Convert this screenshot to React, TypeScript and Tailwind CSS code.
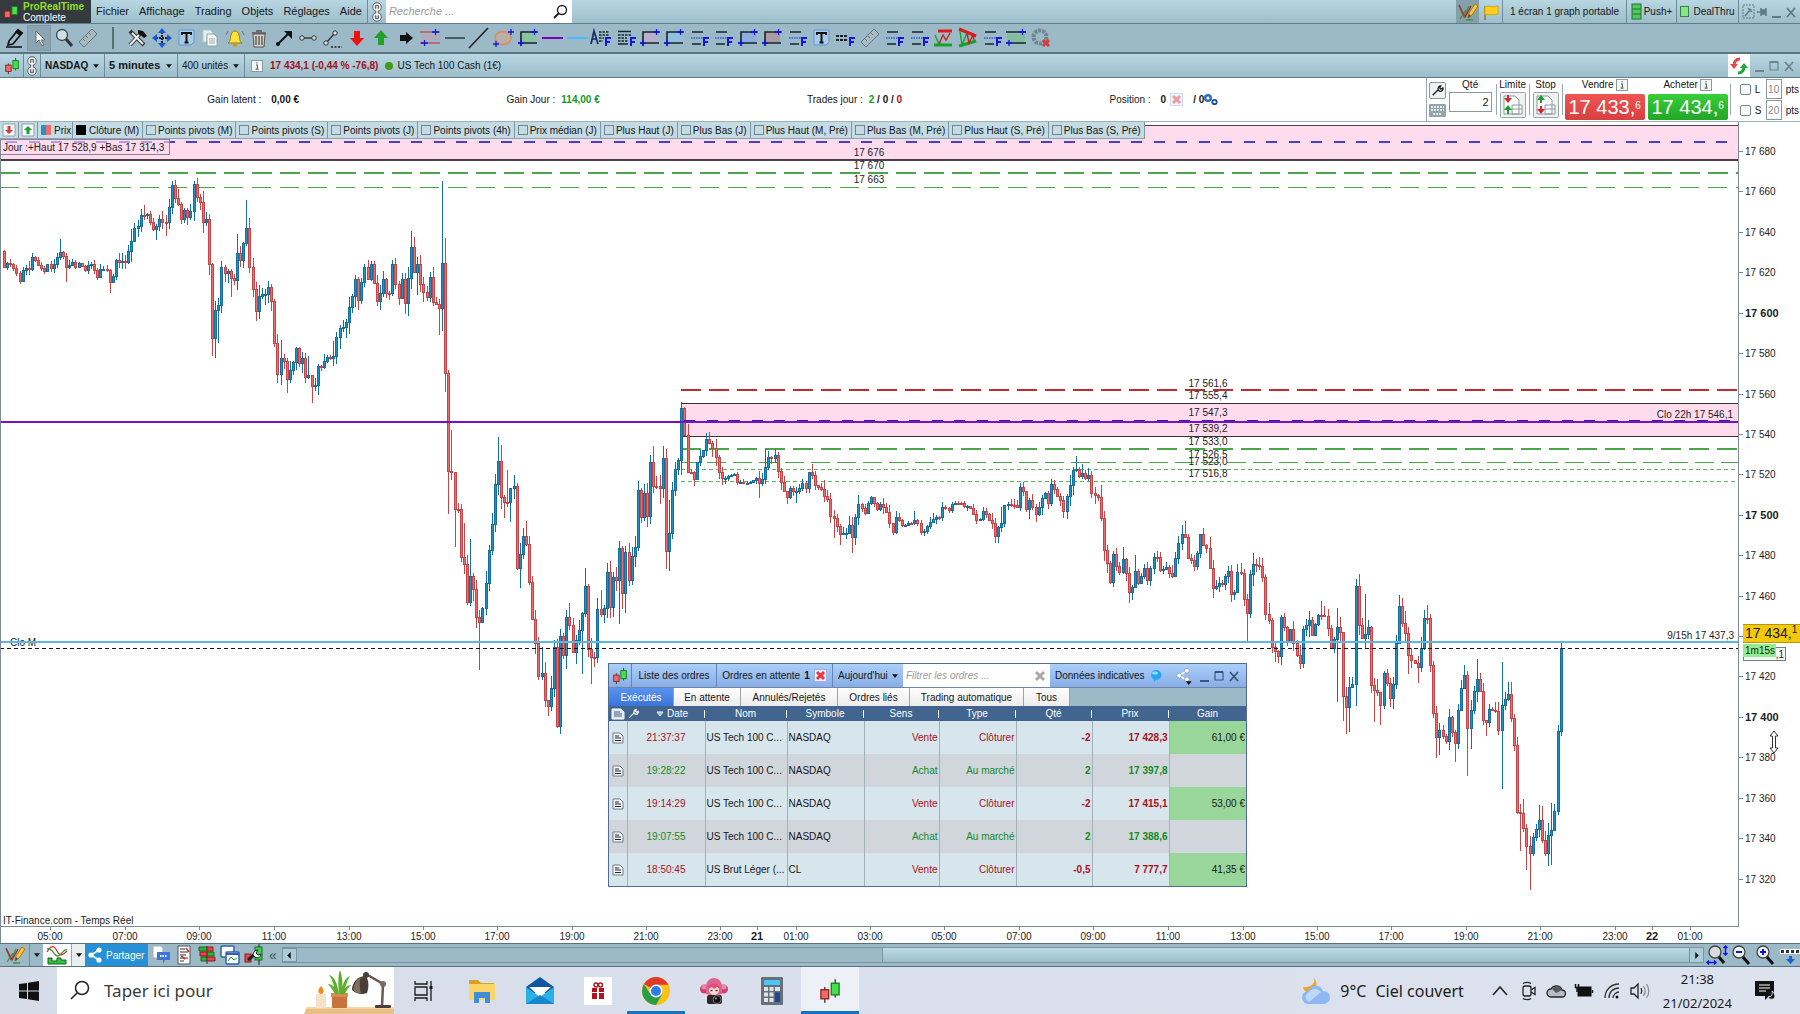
import React, { useMemo, useState } from 'react';

// [x, close, high, low] on the chart grid, 0 when the wick is ordinary
const anchors: number[][] = [
  [4, 267, 0, 0], [8, 263, 0, 0], [13, 268, 0, 0], [16, 273, 0, 0], [20, 281, 0, 0], [22, 270, 0, 0], [29, 269, 0, 0], [31, 257, 0, 0],
  [35, 260, 0, 0], [40, 268, 0, 0], [44, 271, 0, 0], [46, 264, 0, 0], [52, 268, 0, 0], [57, 257, 0, 0], [60, 252, 239, 0], [62, 256, 0, 0],
  [66, 267, 0, 282], [71, 262, 0, 0], [77, 267, 0, 0], [80, 263, 0, 0], [86, 270, 0, 0], [90, 264, 0, 0], [96, 277, 0, 0], [99, 269, 0, 0],
  [105, 270, 0, 0], [109, 282, 0, 293], [114, 276, 0, 0], [116, 260, 0, 0], [126, 262, 0, 0], [129, 251, 0, 0], [132, 241, 0, 0], [135, 228, 0, 0],
  [138, 226, 0, 0], [141, 215, 0, 0], [144, 215, 205, 0], [148, 214, 0, 0], [153, 229, 0, 0], [156, 226, 0, 240], [159, 219, 0, 0], [163, 222, 0, 0],
  [166, 222, 0, 236], [169, 207, 0, 0], [172, 185, 181, 0], [175, 198, 180, 0], [178, 204, 0, 0], [181, 219, 0, 0], [184, 210, 0, 0], [187, 217, 0, 225],
  [190, 211, 0, 0], [194, 184, 0, 0], [197, 197, 0, 0], [200, 202, 0, 0], [203, 222, 0, 0], [206, 219, 0, 0], [209, 264, 214, 0], [212, 338, 0, 356],
  [215, 310, 0, 358], [218, 305, 0, 343], [221, 267, 0, 0], [225, 273, 0, 0], [228, 271, 0, 0], [231, 278, 0, 297], [234, 280, 0, 0], [237, 253, 234, 0],
  [240, 260, 0, 0], [243, 243, 0, 0], [246, 228, 200, 0], [249, 267, 218, 0], [252, 289, 0, 0], [255, 311, 0, 0], [259, 296, 0, 319], [264, 294, 0, 0],
  [268, 287, 0, 0], [271, 301, 0, 0], [274, 343, 0, 0], [277, 374, 0, 383], [280, 358, 340, 0], [283, 361, 0, 0], [286, 379, 0, 393], [289, 370, 0, 0],
  [293, 362, 0, 0], [296, 348, 0, 0], [299, 363, 347, 0], [302, 358, 0, 0], [305, 377, 0, 0], [308, 375, 356, 0], [311, 386, 0, 403], [314, 385, 0, 0],
  [318, 366, 0, 395], [321, 367, 0, 0], [326, 357, 0, 0], [332, 356, 341, 0], [336, 337, 0, 0], [339, 328, 0, 0], [346, 322, 0, 0], [349, 307, 0, 334],
  [352, 296, 0, 0], [355, 279, 0, 0], [358, 300, 0, 0], [361, 282, 0, 0], [364, 267, 0, 0], [367, 279, 0, 0], [370, 264, 0, 0], [374, 283, 0, 0],
  [377, 301, 0, 0], [380, 293, 0, 0], [383, 279, 0, 0], [386, 293, 0, 0], [390, 293, 0, 0], [393, 264, 0, 0], [396, 284, 0, 0], [398, 298, 0, 0],
  [401, 279, 0, 0], [404, 303, 0, 0], [408, 278, 0, 316], [411, 247, 231, 0], [414, 272, 237, 0], [417, 264, 0, 295], [420, 284, 0, 0], [426, 297, 0, 0],
  [430, 277, 0, 0], [433, 302, 0, 0], [439, 308, 0, 335], [442, 263, 181, 331], [445, 373, 238, 392], [448, 471, 370, 514], [451, 472, 430, 0], [454, 509, 0, 547],
  [457, 509, 0, 0], [461, 557, 0, 0], [464, 564, 523, 0], [467, 602, 0, 0], [470, 576, 539, 606], [473, 589, 0, 0], [476, 617, 0, 0], [479, 622, 0, 670],
  [482, 608, 0, 0], [485, 583, 0, 0], [488, 550, 0, 0], [492, 524, 0, 0], [495, 484, 0, 0], [498, 461, 437, 0], [501, 497, 445, 0], [504, 502, 0, 518],
  [507, 502, 470, 0], [510, 488, 0, 522], [514, 486, 475, 0], [517, 568, 0, 0], [520, 554, 0, 588], [523, 536, 0, 0], [526, 544, 521, 0], [529, 582, 0, 0],
  [532, 619, 0, 0], [535, 643, 0, 0], [538, 676, 0, 0], [542, 673, 647, 0], [545, 700, 0, 0], [547, 706, 0, 716], [551, 688, 0, 0], [554, 647, 0, 0],
  [557, 726, 0, 728], [560, 636, 629, 0], [563, 655, 0, 0], [566, 617, 0, 669], [569, 625, 603, 0], [572, 652, 0, 0], [575, 640, 0, 664], [578, 630, 0, 0],
  [582, 613, 0, 674], [585, 586, 568, 0], [588, 649, 0, 0], [591, 657, 0, 684], [594, 657, 0, 0], [597, 609, 0, 0], [600, 614, 590, 0], [603, 608, 0, 0],
  [607, 572, 0, 0], [610, 607, 561, 0], [613, 577, 0, 0], [616, 580, 0, 0], [619, 548, 0, 624], [622, 593, 0, 609], [625, 552, 0, 613], [628, 580, 0, 0],
  [631, 556, 0, 0], [635, 547, 0, 0], [638, 490, 0, 0], [641, 517, 0, 0], [644, 493, 0, 0], [647, 516, 0, 527], [650, 462, 0, 0], [653, 486, 446, 0],
  [659, 488, 0, 504], [663, 458, 0, 0], [666, 551, 449, 569], [669, 533, 500, 571], [672, 490, 0, 0], [675, 469, 0, 0], [678, 460, 0, 0], [681, 408, 402, 475],
  [684, 435, 407, 0], [687, 472, 0, 0], [691, 472, 0, 0], [694, 479, 0, 486], [697, 462, 0, 0], [702, 450, 0, 0], [705, 439, 0, 0], [708, 443, 0, 0],
  [712, 448, 0, 0], [715, 457, 0, 0], [718, 472, 0, 0], [722, 478, 0, 0], [730, 475, 0, 0], [733, 474, 0, 0], [737, 482, 0, 0], [747, 483, 0, 0],
  [755, 478, 0, 0], [758, 483, 0, 498], [761, 479, 0, 0], [765, 467, 449, 0], [769, 457, 0, 0], [774, 455, 449, 0], [777, 471, 0, 0], [780, 482, 0, 0],
  [783, 491, 0, 0], [787, 497, 0, 504], [790, 488, 0, 0], [795, 491, 0, 503], [802, 483, 0, 0], [806, 488, 0, 0], [809, 472, 0, 0], [812, 475, 464, 0],
  [815, 485, 0, 0], [820, 489, 0, 0], [826, 499, 0, 0], [829, 516, 0, 0], [833, 518, 0, 538], [839, 534, 0, 545], [845, 533, 0, 0], [848, 525, 0, 0],
  [852, 537, 0, 553], [855, 517, 0, 0], [858, 504, 0, 0], [864, 513, 0, 0], [868, 503, 0, 0], [871, 497, 0, 0], [877, 509, 0, 0], [880, 504, 0, 0],
  [887, 512, 0, 0], [892, 532, 0, 0], [895, 517, 0, 0], [902, 525, 0, 0], [907, 523, 0, 0], [913, 520, 511, 0], [918, 523, 0, 0], [921, 532, 0, 0],
  [924, 531, 0, 0], [927, 526, 0, 0], [933, 519, 0, 0], [938, 517, 0, 0], [942, 507, 0, 0], [949, 510, 0, 0], [953, 504, 0, 0], [962, 503, 0, 0],
  [970, 508, 0, 0], [976, 520, 0, 0], [979, 519, 0, 0], [982, 511, 0, 0], [988, 520, 0, 0], [992, 523, 0, 0], [995, 536, 0, 0], [998, 527, 0, 0],
  [1001, 523, 507, 0], [1004, 505, 0, 0], [1010, 505, 0, 0], [1017, 507, 0, 0], [1020, 487, 0, 0], [1023, 491, 482, 0], [1026, 509, 0, 0], [1029, 500, 0, 519],
  [1035, 514, 0, 522], [1038, 507, 0, 0], [1041, 498, 0, 0], [1044, 493, 0, 0], [1047, 503, 0, 0], [1051, 484, 479, 0], [1055, 489, 480, 0], [1060, 500, 0, 0],
  [1063, 511, 0, 0], [1066, 496, 0, 0], [1069, 485, 0, 0], [1072, 470, 0, 0], [1075, 469, 456, 0], [1078, 476, 0, 0], [1082, 473, 464, 0], [1085, 478, 0, 0],
  [1090, 470, 0, 0], [1093, 493, 0, 0], [1097, 497, 0, 0], [1100, 518, 0, 0], [1103, 550, 0, 0], [1106, 563, 0, 573], [1109, 582, 0, 0], [1113, 554, 0, 0],
  [1116, 566, 0, 0], [1119, 572, 0, 0], [1122, 559, 547, 0], [1125, 573, 0, 0], [1128, 592, 0, 603], [1131, 587, 0, 600], [1134, 571, 555, 0], [1137, 583, 0, 0],
  [1143, 568, 0, 0], [1147, 580, 0, 0], [1150, 568, 0, 0], [1153, 557, 0, 0], [1156, 557, 551, 0], [1159, 570, 0, 0], [1165, 567, 0, 0], [1168, 573, 0, 0],
  [1172, 576, 0, 0], [1175, 558, 0, 0], [1178, 543, 0, 0], [1181, 534, 0, 0], [1184, 537, 521, 0], [1187, 558, 0, 0], [1193, 566, 0, 0], [1196, 553, 0, 0],
  [1199, 534, 0, 0], [1203, 545, 528, 0], [1206, 548, 0, 0], [1209, 568, 0, 0], [1212, 588, 0, 598], [1218, 583, 0, 0], [1222, 584, 0, 0], [1227, 571, 0, 0],
  [1230, 594, 565, 602], [1233, 592, 0, 0], [1237, 572, 0, 0], [1240, 573, 0, 0], [1243, 599, 0, 0], [1246, 613, 0, 643], [1249, 574, 0, 0], [1252, 564, 553, 0],
  [1258, 566, 557, 0], [1261, 577, 0, 0], [1265, 614, 0, 0], [1268, 620, 0, 0], [1271, 647, 0, 0], [1277, 656, 0, 663], [1280, 617, 0, 0], [1283, 627, 0, 0],
  [1286, 642, 0, 0], [1289, 629, 0, 0], [1293, 643, 0, 0], [1299, 663, 0, 669], [1302, 629, 0, 0], [1308, 620, 0, 0], [1311, 635, 0, 0], [1317, 615, 0, 0],
  [1320, 615, 601, 0], [1324, 616, 606, 0], [1329, 628, 0, 0], [1332, 648, 0, 0], [1336, 627, 608, 702], [1339, 632, 0, 0], [1342, 696, 0, 721], [1345, 707, 0, 734],
  [1349, 687, 0, 732], [1352, 684, 0, 0], [1355, 586, 579, 706], [1358, 625, 0, 0], [1361, 638, 0, 0], [1364, 634, 594, 0], [1367, 627, 0, 0], [1370, 685, 0, 0],
  [1373, 690, 0, 722], [1377, 692, 0, 0], [1380, 705, 0, 725], [1383, 673, 0, 0], [1386, 683, 0, 0], [1389, 698, 0, 0], [1392, 684, 0, 0], [1395, 643, 0, 0],
  [1398, 606, 0, 0], [1401, 623, 598, 0], [1406, 633, 0, 0], [1409, 655, 0, 674], [1414, 663, 0, 0], [1417, 667, 0, 683], [1420, 648, 0, 0], [1423, 618, 0, 0],
  [1426, 618, 605, 0], [1429, 665, 0, 0], [1432, 713, 0, 0], [1435, 737, 0, 758], [1439, 730, 0, 755], [1446, 741, 0, 0], [1450, 717, 0, 0], [1454, 743, 0, 762],
  [1457, 710, 0, 0], [1460, 688, 0, 0], [1463, 675, 665, 0], [1466, 728, 671, 776], [1470, 710, 0, 749], [1473, 691, 0, 0], [1476, 679, 659, 0], [1479, 691, 0, 0],
  [1482, 720, 0, 0], [1485, 722, 0, 736], [1489, 709, 0, 0], [1494, 711, 0, 0], [1497, 730, 0, 0], [1500, 730, 0, 0], [1503, 705, 662, 789], [1507, 694, 682, 0],
  [1510, 718, 682, 0], [1513, 745, 0, 0], [1516, 812, 0, 0], [1519, 813, 0, 851], [1522, 828, 799, 0], [1525, 846, 0, 870], [1528, 883, 0, 890], [1531, 853, 0, 890],
  [1534, 837, 0, 0], [1538, 820, 805, 0], [1541, 840, 806, 0], [1544, 853, 0, 0], [1548, 835, 0, 866], [1552, 830, 803, 865], [1556, 789, 0, 0], [1559, 731, 725, 0],
  [1562, 648, 643, 736],
];

const STEP = 3.107;
const noise = (i: number) => {
  const v = Math.sin(i * 12.9898) * 43758.5453;
  return v - Math.floor(v);
};

const buildCandles = () => {
  const count = Math.round((1562 - 4) / STEP) + 1;
  const closes: number[] = [];
  const highs: number[] = new Array(count).fill(0);
  const lows: number[] = new Array(count).fill(0);
  let prev = { i: 0, y: anchors[0][1] };
  anchors.forEach(([x, close, high, low]) => {
    const i = Math.min(count - 1, Math.round((x - 4) / STEP));
    for (let k = prev.i + 1; k < i; k++) {
      const base = prev.y + ((close - prev.y) * (k - prev.i)) / (i - prev.i);
      closes[k] = base + (noise(k) - 0.5) * 4;
    }
    closes[i] = close;
    if (high) highs[i] = high;
    if (low) lows[i] = low;
    prev = { i, y: close };
  });
  return closes.map((close, i) => {
    const open = i === 0 ? 251 : closes[i - 1];
    const around = closes.slice(Math.max(0, i - 3), i + 4);
    const range = Math.max(...around) - Math.min(...around);
    const reach = 1 + Math.min(11, range * 0.25);
    const high = highs[i] || Math.min(open, close) - noise(i + 900) * reach;
    const low = lows[i] || Math.max(open, close) + noise(i + 400) * reach;
    return { x: 4 + i * STEP, open, close, high, low };
  });
};

const priceY = (price: number) => Math.round(151 + (17680 - price) * 2.021);

const axisPrices = [17680, 17660, 17640, 17620, 17600, 17580, 17560, 17540, 17520, 17500, 17480, 17460, 17420, 17400, 17380, 17360, 17340, 17320];

const formatPrice = (price: number) => `${Math.floor(price / 1000)} ${String(price % 1000).padStart(3, '0')}`;

const timeTicks = [
  { x: 50, label: '05:00' }, { x: 125, label: '07:00' }, { x: 199, label: '09:00' }, { x: 274, label: '11:00' },
  { x: 349, label: '13:00' }, { x: 423, label: '15:00' }, { x: 497, label: '17:00' }, { x: 572, label: '19:00' },
  { x: 646, label: '21:00' }, { x: 720, label: '23:00' }, { x: 757, label: '21', bold: true }, { x: 796, label: '01:00' },
  { x: 870, label: '03:00' }, { x: 944, label: '05:00' }, { x: 1019, label: '07:00' }, { x: 1093, label: '09:00' },
  { x: 1168, label: '11:00' }, { x: 1243, label: '13:00' }, { x: 1317, label: '15:00' }, { x: 1391, label: '17:00' },
  { x: 1466, label: '19:00' }, { x: 1540, label: '21:00' }, { x: 1615, label: '23:00' }, { x: 1652, label: '22', bold: true },
  { x: 1690, label: '01:00' },
];

const levelLabels = [
  { x: 869, y: 152, text: '17 676' },
  { x: 869, y: 165, text: '17 670' },
  { x: 869, y: 179, text: '17 663' },
  { x: 1208, y: 383, text: '17 561,6' },
  { x: 1208, y: 395, text: '17 555,4' },
  { x: 1208, y: 412, text: '17 547,3' },
  { x: 1208, y: 428, text: '17 539,2' },
  { x: 1208, y: 441, text: '17 533,0' },
  { x: 1208, y: 454, text: '17 526,5' },
  { x: 1208, y: 461, text: '17 523,0' },
  { x: 1208, y: 473, text: '17 516,8' },
];

const indicators = [
  'Points pivots (M)', 'Points pivots (S)', 'Points pivots (J)', 'Points pivots (4h)', 'Prix médian (J)', 'Plus Haut (J)', 'Plus Bas (J)',
  'Plus Haut (M, Pré)', 'Plus Bas (M, Pré)', 'Plus Haut (S, Pré)', 'Plus Bas (S, Pré)',
];

const orders = [
  { time: '21:37:37', name: 'US Tech 100 C...', symbol: 'NASDAQ', side: 'Vente', type: 'Clôturer', qty: '-2', price: '17 428,3', gain: '61,00 €' },
  { time: '19:28:22', name: 'US Tech 100 C...', symbol: 'NASDAQ', side: 'Achat', type: 'Au marché', qty: '2', price: '17 397,8', gain: '' },
  { time: '19:14:29', name: 'US Tech 100 C...', symbol: 'NASDAQ', side: 'Vente', type: 'Clôturer', qty: '-2', price: '17 415,1', gain: '53,00 €' },
  { time: '19:07:55', name: 'US Tech 100 C...', symbol: 'NASDAQ', side: 'Achat', type: 'Au marché', qty: '2', price: '17 388,6', gain: '' },
  { time: '18:50:45', name: 'US Brut Léger (...', symbol: 'CL', side: 'Vente', type: 'Clôturer', qty: '-0,5', price: '7 777,7', gain: '41,35 €' },
];

const orderTabs = [
  { label: 'Exécutés', width: 'w-[65px]' },
  { label: 'En attente', width: 'w-[67px]' },
  { label: 'Annulés/Rejetés', width: 'w-[97px]' },
  { label: 'Ordres liés', width: 'w-[72px]' },
  { label: 'Trading automatique', width: 'w-[114px]' },
  { label: 'Tous', width: 'w-[46px]' },
];

type IconProps = { children: React.ReactNode; className?: string; box?: string };
const Icon = ({ children, className = 'w-[22px] h-[22px]', box = '0 0 22 22' }: IconProps) => (
  <svg viewBox={box} className={`${className} shrink-0`} fill="none" aria-hidden="true">{children}</svg>
);

const CandleLogo = ({ className }: { className?: string }) => (
  <Icon className={className} box="0 0 20 20">
    <path d="M6 7v12M14 1v14" stroke="#333" strokeWidth="1" />
    <rect x="3" y="9" width="6" height="7" fill="#f06a68" stroke="#8e2020" />
    <rect x="11" y="4" width="6" height="9" fill="#46e04c" stroke="#187a1c" />
  </Icon>
);

const ChainIcon = () => (
  <Icon className="w-[14px] h-[20px]" box="0 0 14 20">
    <g stroke="#555" strokeWidth="3.4"><rect x="4" y="2" width="6" height="6" rx="3" /><rect x="4" y="12" width="6" height="6" rx="3" /><path d="M7 6v8" /></g>
    <g stroke="#f4f4f4" strokeWidth="1.6"><rect x="4" y="2" width="6" height="6" rx="3" /><rect x="4" y="12" width="6" height="6" rx="3" /><path d="M7 6v8" /></g>
  </Icon>
);

const Caret = ({ className = '' }: { className?: string }) => (
  <svg viewBox="0 0 8 5" className={`w-[6px] h-[4px] shrink-0 ${className}`} aria-hidden="true"><path d="M0 0h8L4 5z" fill="#111" /></svg>
);

const InfoIcon = () => (
  <Icon className="w-[12px] h-[12px]" box="0 0 12 12">
    <rect x="0.5" y="0.5" width="11" height="11" fill="#f4f6f6" stroke="#8b9a9e" />
    <path d="M6 2.2v1.4M5 5h1.4v4M4.6 9.2h3" stroke="#5b6a70" strokeWidth="1.2" />
  </Icon>
);

const DrawIcon = () => (
  <Icon>
    <path d="M2 5l5 11M3 18l6-9M7 16l5-11M9 19h7" stroke="#3f8f52" strokeWidth="1.3" />
    <path d="M2 4l6 12 6-11" stroke="#b52d2d" strokeWidth="1.4" />
    <path d="M11 17l1-5 6-9 3 2-6 9z" fill="#f7c83a" stroke="#a87910" />
    <path d="M11 17l1-4 2 2z" fill="#444" />
  </Icon>
);

const Wrench = ({ color = '#222' }: { color?: string }) => (
  <path d="M4 18L12 10M12 10c-1-3 1-6 4-6l-2 3 2 2 3-2c1 3-2 6-5 5z" stroke={color} strokeWidth="2" strokeLinejoin="round" />
);

const CrossBox = ({ faded = false }: { faded?: boolean }) => (
  <Icon className={faded ? 'w-[13px] h-[13px] opacity-50' : 'w-[13px] h-[13px]'} box="0 0 13 13">
    <rect x="0.5" y="0.5" width="12" height="12" fill="#e5eefa" stroke="#9db8d8" />
    <path d="M3 3l7 7M10 3l-7 7" stroke="#ef3340" strokeWidth="3" />
  </Icon>
);

const WindowButtons = ({ color, max = true }: { color: string; max?: boolean }) => (
  <div className="flex items-center gap-[1px]">
    <button aria-label="Réduire"><Icon className="w-[14px] h-[14px]" box="0 0 14 14"><path d="M3 12h9" stroke={color} strokeWidth="2" /></Icon></button>
    {max && <button aria-label="Agrandir"><Icon className="w-[14px] h-[14px]" box="0 0 14 14"><path d="M3 3h8v8H3z" stroke={color} strokeWidth="1.2" /><path d="M3 3h8" stroke={color} strokeWidth="2" /></Icon></button>}
    <button aria-label="Fermer"><Icon className="w-[14px] h-[14px]" box="0 0 14 14"><path d="M3 3l8 9M11 3l-8 9" stroke={color} strokeWidth="1.8" /></Icon></button>
  </div>
);

const Fletter = () => <path d="M16 19v-8h5M16 15h4" stroke="#1414e6" strokeWidth="2" />;

const FibIcon = () => (
  <Icon>
    <path d="M4 5h11M4 17h9" stroke="#16262c" strokeWidth="1.6" />
    <path d="M3 11h13" stroke="#2d5be8" strokeWidth="1.6" strokeDasharray="1.5 1" />
    <Fletter />
  </Icon>
);

const NoteFIcon = () => (
  <Icon>
    <path d="M3 4.500h13M3 17h10" stroke="#16262c" strokeWidth="1.500" />
    <path d="M3 8h13M3 11h9M3 14h10" stroke="#16262c" strokeWidth="1.700" strokeDasharray="2.500 1" />
    <Fletter />
  </Icon>
);

const ZoneIcon = ({ fill }: { fill: string }) => (
  <Icon>
    <rect x="4" y="5" width="15" height="11" fill={fill} />
    <path d="M20 5H4v11h16M1 16h6M4 13v6" stroke="#16262c" strokeWidth="1.6" />
    <path d="M14 5h7M17.500 2v6M1 16h6M4 13v6" stroke="#1414e6" strokeWidth="1.3" />
  </Icon>
);

const TextIcon = () => (
  <Icon>
    <path d="M4 3h15v12l-3 3H4z" fill="#a9cbe6" stroke="#5c97e0" />
    <path d="M7 8V6h9v2M11.500 6v9M9.500 15.500h4" stroke="#111" strokeWidth="2" />
  </Icon>
);

const RulerIcon = () => (
  <Icon><path d="M2 15L15 2l5 5L7 20z" fill="#a9bac1" stroke="#66757c" /><path d="M6 12l2 2M9 9l2 2M12 6l2 2" stroke="#66757c" /></Icon>
);

const toolIcons: { name: string; icon: React.ReactNode; active?: boolean }[] = [
  { name: 'Crayon', icon: <Icon><path d="M5 14L14 3l4 3-9 11-5 1z" stroke="#111" strokeWidth="1.7" /><path d="M14 3l4 3-2 2-4-3zM2 20h16" fill="#111" stroke="#111" strokeWidth="1.5" /></Icon> },
  { name: 'Sélection', active: true, icon: <Icon><path d="M8 4v12l3-3 3 6 2-1-3-5h4z" fill="#fff" stroke="#5f6c72" /></Icon> },
  { name: 'Zoom', icon: <Icon><circle cx="9" cy="8" r="5.500" fill="#cfdfe6" stroke="#3b474c" strokeWidth="1.300" /><path d="M13 12l6 7" stroke="#333" strokeWidth="3" /></Icon> },
  { name: 'Règle', icon: <RulerIcon /> },
  { name: 'Séparateur', icon: <Icon><path d="M11 0v22" stroke="#3c4e55" strokeWidth="1.4" /></Icon> },
  { name: 'Outils', icon: <Icon><path d="M4 18L15 6M4 4l14 14" stroke="#333" strokeWidth="4" /><path d="M4 18L13 8M6 6l11 11" stroke="#eee" strokeWidth="2" /><path d="M12 3l5 1 4 5-3 2-6-5z" fill="#111" /></Icon> },
  { name: 'Déplacer', icon: <Icon><path d="M11 5v12M5 11h12" stroke="#123" strokeWidth="2" strokeDasharray="2 1" /><path d="M11 1l4 5H7zM11 21l4-5H7zM1 11l5-4v8zM21 11l-5-4v8z" fill="#1958d8" /></Icon> },
  { name: 'Texte', icon: <TextIcon /> },
  { name: 'Copier', icon: <Icon><path d="M4 3h7l3 3v9H4z" fill="#e5edf0" stroke="#b7c8cf" /><path d="M8 7h7l3 3v9H8z" fill="#f6f8f9" stroke="#8fa3ab" /><path d="M10 12h6M10 14h6M10 16h6" stroke="#9aa9af" /></Icon> },
  { name: 'Alerte', icon: <Icon><path d="M4 16c3-2 2-5 3-8s2-4 4-4 3 1 4 4 0 6 3 8z" fill="#ffe23d" stroke="#9b7a08" /><circle cx="11" cy="18" r="2" fill="#c79b12" /><path d="M4 4L2 8M18 4l2 4" stroke="#6a7578" /></Icon> },
  { name: 'Corbeille', icon: <Icon><path d="M5 7h12l-1 13H6z" fill="#d8d2cc" stroke="#5c5654" /><path d="M4 6h14M8 4h6M8 9v9M11 9v9M14 9v9" stroke="#5c5654" strokeWidth="1.400" /></Icon> },
  { name: 'Flèche', icon: <Icon><path d="M4 18L15 7" stroke="#111" strokeWidth="2" /><path d="M11 4h8v8z" fill="#111" /><circle cx="5" cy="17" r="2" fill="#111" /></Icon> },
  { name: 'Segment', icon: <Icon><path d="M6 11h10" stroke="#333" strokeWidth="1.400" /><circle cx="5" cy="11" r="2.200" fill="#d6e2e7" stroke="#333" /><circle cx="17" cy="11" r="2.200" fill="#d6e2e7" stroke="#333" /></Icon> },
  { name: 'Segment libre', icon: <Icon><path d="M6 15l7-8" stroke="#333" strokeWidth="1.400" /><path d="M10 20h11" stroke="#222" strokeWidth="1.500" strokeDasharray="2 1.500" /><circle cx="5" cy="16" r="2.200" fill="#d6e2e7" stroke="#333" /><circle cx="14" cy="6" r="2.200" fill="#d6e2e7" stroke="#333" /></Icon> },
  { name: 'Flèche vente', icon: <Icon><path d="M8 4h6v7h4l-7 8-7-8h4z" fill="#ee1111" /></Icon> },
  { name: 'Flèche achat', icon: <Icon><path d="M8 18h6v-7h4l-7-8-7 8h4z" fill="#21a12a" /></Icon> },
  { name: 'Flèche droite', icon: <Icon><path d="M5 8h6V5l7 6-7 6v-3H5z" fill="#111" /></Icon> },
  { name: 'Canal', icon: <Icon><path d="M1 5h20M1 16h20" stroke="#bb6a78" strokeWidth="2" /><path d="M2 8h18v5H2z" fill="#b6a9b6" /><path d="M13 5h7M16.500 2v6M2 16h7M5.500 13v6" stroke="#1414e6" strokeWidth="1.300" /></Icon> },
  { name: 'Ligne horizontale', icon: <Icon><path d="M1 11h20" stroke="#4c5e65" strokeWidth="2" /></Icon> },
  { name: 'Droite', icon: <Icon><path d="M1 21L20 1" stroke="#222" strokeWidth="1.600" /></Icon> },
  { name: 'Ellipse', icon: <Icon><ellipse cx="11" cy="11" rx="8" ry="6.500" fill="#bab0a8" stroke="#d98f55" strokeWidth="1.500" /><path d="M16 5h6M19 2v6M1 17h6M4 14v6" stroke="#1414e6" strokeWidth="1.300" /></Icon> },
  { name: 'Rectangle vert', icon: <ZoneIcon fill="#8cc2a4" /> },
  { name: 'Ligne violette', icon: <Icon><path d="M1 11h21" stroke="#7a00c0" strokeWidth="2" /></Icon> },
  { name: 'Ligne bleue', icon: <Icon><path d="M1 11h21" stroke="#4ab8f5" strokeWidth="2" /></Icon> },
  { name: 'Annotation', icon: <Icon><path d="M1 17L4 4l4 13M2 12h5" stroke="#1b2c60" strokeWidth="1.700" /><path d="M9 5h10M9 8h10M9 11h5M9 14h4" stroke="#16262c" strokeWidth="1.700" strokeDasharray="2.500 1" /><Fletter /></Icon> },
  { name: 'Note', icon: <NoteFIcon /> },
  { name: 'Zone mauve', icon: <ZoneIcon fill="#b9aecb" /> },
  { name: 'Zone bleue', icon: <ZoneIcon fill="#8fc0dd" /> },
  { name: 'Fibonacci 1', icon: <FibIcon /> },
  { name: 'Fibonacci 2', icon: <FibIcon /> },
  { name: 'Zone indigo', icon: <ZoneIcon fill="#8eaee0" /> },
  { name: 'Zone brune', icon: <ZoneIcon fill="#ab9ba4" /> },
  { name: 'Fibonacci 3', icon: <FibIcon /> },
  { name: 'Bloc texte', icon: <TextIcon /> },
  { name: 'Étiquette', icon: <Icon><path d="M2 9h12M2 13h12" stroke="#16262c" strokeWidth="2" strokeDasharray="3 1" /><Fletter /></Icon> },
  { name: 'Mesure', icon: <RulerIcon /> },
  { name: 'Fibonacci 4', icon: <FibIcon /> },
  { name: 'Fibonacci 5', icon: <FibIcon /> },
  { name: 'Support', icon: <Icon><path d="M6 4h14" stroke="#e01b1b" strokeWidth="3" /><path d="M2 18h18" stroke="#17a22a" strokeWidth="3" /><path d="M3 8l4 9" stroke="#17a22a" strokeWidth="1.400" /><path d="M7 17l4-9 3 5 4-7" stroke="#c22" strokeWidth="1.400" /></Icon> },
  { name: 'Triangle', icon: <Icon><path d="M3 2l17 7" stroke="#e01b1b" strokeWidth="3" /><path d="M3 19l17-5" stroke="#17a22a" strokeWidth="3" /><path d="M4 4l2 14 5-12" stroke="#17a22a" strokeWidth="1.400" /><path d="M11 6l2 10 4-8 1 5" stroke="#c22" strokeWidth="1.400" /></Icon> },
  { name: 'Fibonacci 6', icon: <FibIcon /> },
  { name: 'Zone verte', icon: <Icon><path d="M2 7h18v8H2z" fill="#83bda0" /><path d="M1 5h20M1 16h20" stroke="#16262c" strokeWidth="1.600" /><path d="M14 5h7M17.500 2v6M1 16h6M4 13v6" stroke="#1414e6" strokeWidth="1.300" /></Icon> },
  { name: 'Désactiver', icon: <Icon><circle cx="10" cy="10" r="6.500" stroke="#73848b" strokeWidth="4" strokeDasharray="3 1" /><path d="M13 13l6 6M19 13l-6 6" stroke="#d63a3a" strokeWidth="3" /></Icon> },
];

const Dropdown = ({ label, value, className }: { label: string; value: string; className: string }) => (
  <div className={`relative flex items-center border-r border-[#6e8a96] ${className}`}>
    <select aria-label={label} className="h-full w-full appearance-none bg-transparent pl-[4px] outline-none" defaultValue={value}>
      <option>{value}</option>
    </select>
    <Caret className="absolute right-[5px] pointer-events-none" />
  </div>
);

const TitleBar = () => (
  <header className="flex h-[24px] items-stretch border-b border-[#5f7d89] bg-linear-to-b from-[#b8d7e3] to-[#9dbdca] text-[11px]">
    <div className="flex w-[91px] items-center gap-[3px] bg-[#333b3f] pl-[2px]">
      <CandleLogo className="w-[18px] h-[18px]" />
      <div className="text-[10px] leading-[11px]">
        <div className="font-bold text-[#94dd2b]">ProRealTime</div>
        <div className="text-white">Complete</div>
      </div>
    </div>
    <nav className="flex">
      {['Fichier', 'Affichage', 'Trading', 'Objets', 'Réglages', 'Aide'].map((item) => (
        <button key={item} className="px-[5px]">{item}</button>
      ))}
    </nav>
    <div className="flex items-center border-l border-[#6e8a96] px-[2px]"><ChainIcon /></div>
    <div className="flex w-[186px] items-center bg-white pr-1">
      <input type="text" aria-label="Recherche" placeholder="Recherche ..." className="w-full bg-transparent pl-[3px] italic outline-none placeholder:text-[#9a9a9a]" />
      <Icon className="w-[15px] h-[15px]" box="0 0 15 15"><circle cx="9" cy="6" r="4.500" stroke="#222" strokeWidth="1.400" /><path d="M6 9l-5 5" stroke="#222" strokeWidth="2" /></Icon>
    </div>
    <div className="flex-1" />
    <div className="flex text-[10px]">
      <button aria-label="Dessin" className="flex w-[23px] items-center justify-center bg-[#86a0aa]"><DrawIcon /></button>
      <button aria-label="Drapeau" className="flex w-[24px] items-center justify-center border-r border-[#6e8a96]">
        <Icon className="w-[18px] h-[18px]" box="0 0 18 18"><path d="M3 3v14" stroke="#8a7030" strokeWidth="1.400" /><path d="M3 4c4-2 6 1 13-1v8c-6 2-9-1-13 1z" fill="#ffcf1f" stroke="#e0a800" /></Icon>
      </button>
      <button className="w-[124px] border-r border-[#6e8a96]">1 écran 1 graph portable</button>
      <button className="flex w-[50px] items-center justify-center gap-[2px] border-r border-[#6e8a96]">
        <Icon className="w-[11px] h-[17px]" box="0 0 11 17"><rect x="1" y="1" width="9" height="15" fill="#4fc95b" stroke="#28703a" /><path d="M1 6h9M1 11h9" stroke="#28703a" /></Icon>
        Push+
      </button>
      <button className="flex w-[62px] items-center justify-center gap-[4px] border-r border-[#6e8a96]">
        <span className="h-[11px] w-[9px] border border-[#3d7f48] bg-[#86e68c]" />
        DealThru
      </button>
    </div>
    <div className="flex items-center pl-[3px] pr-[2px]">
      <Icon className="w-[13px] h-[15px]" box="0 0 13 15"><rect x="1" y="1" width="11" height="13" stroke="#5f7a85" strokeDasharray="2 1" /><path d="M3 12l6-7M6 4l4 4" stroke="#5f7a85" strokeWidth="1.500" /></Icon>
      <Icon className="w-[14px] h-[14px]" box="0 0 14 14"><path d="M2 7h4M6 3v8M6 5h5v4H6zM11 3v8" fill="#5f7a85" stroke="#5f7a85" strokeWidth="1.500" /></Icon>
      <WindowButtons color="#5f7a85" max={false} />
    </div>
  </header>
);

const Toolbar = () => (
  <div className="h-[30px] border-b-2 border-[#5b7580] bg-[#9bb9c7] pl-[3px]">
    <div className="flex h-full w-[1050px] items-center justify-between">
      {toolIcons.map((tool) => (
        <button
          key={tool.name}
          aria-label={tool.name}
          className={tool.active ? 'flex h-[26px] w-[24px] items-center justify-center bg-[#8ba6b2] border border-[#7f98a3]' : 'flex w-[24px] items-center justify-center'}
        >
          {tool.icon}
        </button>
      ))}
    </div>
  </div>
);

const ChartHeader = () => (
  <div className="flex h-[24px] items-stretch border-b border-[#5f7d89] bg-linear-to-b from-[#b8d7e3] to-[#9dbdca] text-[10px]">
    <div className="flex w-[24px] items-center justify-center border-r border-[#6e8a96]"><CandleLogo className="w-[18px] h-[18px]" /></div>
    <div className="flex w-[17px] items-center justify-center border-r border-[#6e8a96]"><ChainIcon /></div>
    <Dropdown label="Valeur" value="NASDAQ" className="w-[64px] font-bold" />
    <Dropdown label="Unité de temps" value="5 minutes" className="w-[73px] font-bold text-[11px]" />
    <Dropdown label="Historique" value="400 unités" className="w-[67px]" />
    <div className="flex items-center gap-[7px] pl-[6px]">
      <InfoIcon />
      <span className="font-bold text-[#a40f1c]">17 434,1 (-0,44 % -76,8)</span>
      <span className="flex items-center gap-[4px]">
        <span className="h-[8px] w-[8px] rounded-full bg-[#3f9b12]" />
        US Tech 100 Cash (1€)
      </span>
    </div>
    <div className="flex-1" />
    <button aria-label="Actualiser" className="flex w-[22px] items-center justify-center bg-white">
      <Icon className="w-[18px] h-[18px]" box="0 0 18 18">
        <path d="M10 2C5 2 4 5 4 9" stroke="#e5484a" strokeWidth="3" /><path d="M0 7h8l-4 5z" fill="#e5484a" />
        <path d="M8 16c5 0 6-3 6-7" stroke="#1fa83a" strokeWidth="3" /><path d="M10 11h8l-4-5z" fill="#1fa83a" />
      </Icon>
    </button>
    <div className="flex items-center pl-[2px] pr-[4px]"><WindowButtons color="#6c858f" /></div>
  </div>
);

const OrderTypeIcon = ({ flip = false }: { flip?: boolean }) => (
  <Icon className="w-[26px] h-[26px]" box="0 0 26 26">
    <rect x="0.500" y="0.500" width="25" height="25" rx="1" fill="#eff2f3" stroke="#9aa6ab" />
    <path d="M4 4h11l4 4v14H4zM12 13h10v9H12zM12 17h10" fill="#fff" stroke="#8b979c" />
    <path d={flip ? 'M8 3l4 5H4zM7 8h2v3H7z' : 'M8 11l4-5H4zM7 3h2v3H7z'} fill={flip ? '#1d9d2b' : '#d8252b'} />
    <path d={flip ? 'M8 22l4-5H4zM7 14h2v3H7z' : 'M8 13l4 5H4zM7 18h2v4H7z'} fill={flip ? '#d8252b' : '#1d9d2b'} />
  </Icon>
);

const TradePanel = () => (
  <div className="flex h-[43px] shrink-0 items-stretch border-l border-[#9aa9af] pl-[2px] text-[10px]">
    <div className="flex flex-col items-center justify-evenly">
      <button aria-label="Paramètres" className="rounded-xs border border-[#8b979c] bg-[#eff2f3]"><Icon className="w-[15px] h-[15px]"><Wrench /></Icon></button>
      <button aria-label="Clavier">
        <Icon className="w-[17px] h-[13px]" box="0 0 17 13"><rect width="17" height="13" rx="1" fill="#93a4ab" /><path d="M2 3h13M2 6h13M4 10h9" stroke="#fff" strokeWidth="1.500" strokeDasharray="2 1" /></Icon>
      </button>
    </div>
    <label className="ml-[3px] flex w-[43px] flex-col items-center">
      <span className="leading-[14px]">Qté</span>
      <input type="text" defaultValue="2" className="h-[20px] w-full border border-[#8b979c] bg-white px-[2px] text-right text-[11px]" />
    </label>
    <div className="my-[6px] ml-[4px] w-px bg-[#9aa9af]" />
    <div className="flex w-[32px] flex-col items-center"><span className="leading-[14px]">Limite</span><button aria-label="Ordre limite"><OrderTypeIcon /></button></div>
    <div className="my-[6px] w-px bg-[#9aa9af]" />
    <div className="flex w-[32px] flex-col items-center"><span className="leading-[14px]">Stop</span><button aria-label="Ordre stop"><OrderTypeIcon flip /></button></div>
    <div className="my-[6px] w-px bg-[#9aa9af]" />
    <div className="ml-[2px] flex w-[80px] flex-col items-center">
      <span className="flex items-center gap-[2px] leading-[14px]">Vendre<InfoIcon /></span>
      <button className="mt-[2px] h-[26px] w-full rounded-xs bg-linear-to-b from-[#ef5552] to-[#d83f40] text-[20px] leading-[26px] text-white whitespace-nowrap">17 433,<sup className="text-[10px]">6</sup></button>
    </div>
    <div className="ml-[3px] flex w-[80px] flex-col items-center">
      <span className="flex items-center gap-[2px] leading-[14px]">Acheter<InfoIcon /></span>
      <button className="mt-[2px] h-[26px] w-full rounded-xs bg-linear-to-b from-[#37cf3a] to-[#22a626] text-[20px] leading-[26px] text-white whitespace-nowrap">17 434,<sup className="text-[10px]">6</sup></button>
    </div>
    <div className="my-[6px] ml-[2px] w-px bg-[#9aa9af]" />
    <div className="flex flex-col justify-evenly pl-[9px] pr-px">
      {[['L', '10'], ['S', '20']].map(([side, pts]) => (
        <div key={side} className="flex items-center gap-[4px]">
          <label className="flex w-[22px] items-center gap-[4px]">
            <input type="checkbox" className="h-[11px] w-[11px] shrink-0 appearance-none rounded-xs border border-[#76858b] bg-white" />
            {side}
          </label>
          <input type="text" aria-label={`Points ${side}`} defaultValue={pts} className="h-[20px] w-[16px] border border-[#8b979c] text-center text-[#8a8a8a]" />
          <span>pts</span>
        </div>
      ))}
    </div>
  </div>
);

const InfoRow = () => (
  <section className="flex border-b border-[#9db3bb] bg-white text-[10px]">
    <div className="flex flex-1 items-center justify-evenly">
      <div className="flex gap-[10px]"><span>Gain latent :</span><b>0,00 €</b></div>
      <div className="flex gap-[6px]"><span>Gain Jour :</span><b className="text-[#129a1e]">114,00 €</b></div>
      <div className="flex gap-[6px]"><span>Trades jour :</span><b><span className="text-[#129a1e]">2</span> / 0 / <span className="text-[#b01020]">0</span></b></div>
      <div className="flex items-center gap-[10px]">
        <span>Position :</span>
        <span className="flex items-center gap-[4px] font-bold">0 <CrossBox faded /></span>
        <span className="flex items-center font-bold">/ 0
          <Icon className="w-[14px] h-[12px]" box="0 0 14 12"><circle cx="4" cy="4" r="2.800" stroke="#2b6fc4" strokeWidth="2.400" /><circle cx="10.500" cy="8" r="2.200" stroke="#1c4f9c" strokeWidth="1.800" /></Icon>
        </span>
      </div>
    </div>
    <TradePanel />
  </section>
);

const IndicatorStrip = () => (
  <div className="absolute top-0 left-0 flex h-[17px] items-stretch border-b border-[#8ea5ae] bg-[#c4dbe4] text-[10px]">
    {['#d93a3f', '#1f9d2f'].map((color, i) => (
      <button key={color} aria-label={i === 0 ? 'Réduire' : 'Développer'} className="flex w-[19px] items-center justify-center border-r border-[#7f99a4]">
        <Icon className="w-[14px] h-[14px]" box="0 0 14 14">
          <path d="M1 1h12v12H1z" fill="#f7f9fa" stroke="#8da3ac" />
          <path d={i === 0 ? 'M7 11l4-4H8.500V3h-3v4H3z' : 'M7 3l4 4H8.500v4h-3V7H3z'} fill={color} />
        </Icon>
      </button>
    ))}
    <div className="flex w-[35px] items-center gap-[3px] border-r border-[#7f99a4] pl-[3px]">
      <span className="flex h-[10px] w-[10px]"><span className="w-1/2 bg-[#2c8fc4]" /><span className="w-1/2 bg-[#f26a6a]" /></span>
      Prix
    </div>
    <div className="flex w-[70px] items-center gap-[3px] border-r border-[#7f99a4] pl-[3px] whitespace-nowrap">
      <span className="h-[10px] w-[10px] bg-black" />
      Clôture (M)
    </div>
    {indicators.map((name) => (
      <label key={name} className="flex items-center gap-[2px] border-r border-[#7f99a4] px-[3px] whitespace-nowrap">
        <input type="checkbox" className="h-[10px] w-[10px] appearance-none border border-[#6f8790]" />
        {name}
      </label>
    ))}
  </div>
);

const PriceChart = () => {
  const candles = useMemo(buildCandles, []);

  return (
    <svg viewBox="0 122 1800 821" className="block h-auto w-full bg-white" fontFamily="'Liberation Sans', sans-serif" fontSize="10" shapeRendering="crispEdges">
      {/* Zones */}
      <rect x="0" y="125" width="1738" height="35" fill="#fedcee" />
      <path d="M0 125.500H1738M0 160H1738" stroke="#4a4048" strokeWidth="1.500" fill="none" />
      <path d="M6 142H1738" stroke="#4a3fc8" strokeWidth="2" strokeDasharray="11 11.500" />
      <path d="M0 173H1738" stroke="#4ba64b" strokeWidth="2" strokeDasharray="20 8" />
      <path d="M0 187.500H1738" stroke="#4ba64b" strokeWidth="1" strokeDasharray="19 9" />
      <rect x="681" y="403.500" width="1057" height="33" fill="#fedcee" stroke="#333" />
      <path d="M681 390H1738" stroke="#c02a30" strokeWidth="2" strokeDasharray="20 8" />
      <path d="M681 449H1738" stroke="#4ba64b" strokeWidth="2" strokeDasharray="20 8" />
      <path d="M681 462.500H1738" stroke="#4ba64b" strokeWidth="1" strokeDasharray="19 7" />
      <path d="M681 469.500H1738M681 481.500H1738" stroke="#5fb35f" strokeWidth="1" strokeDasharray="4 3" fill="none" />

      {/* Candles */}
      {candles.map((c, i) => {
        const up = c.close < c.open;
        const top = Math.round(Math.min(c.open, c.close));
        const height = Math.max(1, Math.round(Math.abs(c.close - c.open)));
        const x = Math.round(c.x);
        return (
          <g key={i} fill={up ? '#1a92c6' : '#f26a68'} stroke={up ? '#146f9c' : '#c64549'}>
            <path d={`M${x + 0.5} ${Math.round(c.high)}V${Math.round(c.low)}`} />
            <rect x={x - 0.5} y={top + 0.5} width="2" height={height} />
          </g>
        );
      })}

      {/* Reference lines */}
      <path d="M0 422H1738" stroke="#7a10c0" strokeWidth="2" />
      <path d="M684 420.500H1738" stroke="#2b1cb8" strokeWidth="1" strokeDasharray="11 11.500" />
      <g fill="#1c1c1c" dominantBaseline="central">
        {levelLabels.map((l) => <text key={l.text} x={l.x} y={l.y} textAnchor="middle">{l.text}</text>)}
        <text x="1733" y="414" textAnchor="end">Clo 22h 17 546,1</text>
        <text x="1734" y="635" textAnchor="end">9/15h 17 437,3</text>
        <text x="10" y="642">Clo M</text>
        <text x="3" y="920">IT-Finance.com - Temps Réel</text>
      </g>
      <path d="M0 642H1738" stroke="#5ab8e6" strokeWidth="2" />
      <path d="M0 648.500H1738" stroke="#111" strokeWidth="1" strokeDasharray="4 3" />
      <rect x="0.500" y="139.500" width="169" height="15" fill="#fedcee" fillOpacity="0.6" stroke="#8a7f9c" />
      <text x="3" y="147" dominantBaseline="central" fill="#1c1c1c">Jour :+Haut 17 528,9 +Bas 17 314,3</text>

      {/* Axes */}
      <path d="M0.500 122V943M1738.500 122V926.500H0" stroke="#7d8b94" fill="none" />
      <g dominantBaseline="central" fill="#1c1c1c">
        {axisPrices.map((p) => (
          <g key={p}>
            <path d={`M1739 ${priceY(p) + 0.5}h4`} stroke="#7d8b94" />
            <text x="1745" y={priceY(p)} fontSize={p % 100 === 0 ? 11 : 10} fontWeight={p % 100 === 0 ? 700 : 400}>{formatPrice(p)}</text>
          </g>
        ))}
        {timeTicks.map((t) => (
          <g key={t.x}>
            <path d={`M${t.x + 0.5} 926v4`} stroke="#7d8b94" />
            <text x={t.x} y="936" textAnchor="middle" fontSize={t.bold ? 11 : 10} fontWeight={t.bold ? 700 : 400}>{t.label}</text>
          </g>
        ))}
        <path d="M1739 636.500h4" stroke="#7d8b94" />
        <rect x="1743.500" y="647.500" width="42" height="13" fill="#f4f7f4" stroke="#6f7f88" />
        <text x="1784" y="654" textAnchor="end">,1</text>
        <rect x="1743" y="644" width="33" height="13" fill="#8fee8f" />
        <text x="1745" y="650">1m15s</text>
        <rect x="1743" y="624" width="57" height="18" fill="#f3c90e" />
        <path d="M1743 624h57M1743 642h57" stroke="#b8960c" />
        <text x="1745" y="633" fontSize="14">17 434,<tspan fontSize="10" dy="-4">1</tspan></text>
      </g>
      <path d="M1774 731l4 5h-2.500v12h2.500l-4 5-4-5h2.500v-12h-2.500z" fill="#fff" stroke="#333" shapeRendering="auto" />
    </svg>
  );
};

const OrdersWindow = () => {
  const [tab, setTab] = useState('Exécutés');

  return (
    <section className="absolute top-[541px] left-[608px] w-[639px] border border-[#4f6d92] bg-[#9bb9c7] text-[10px]">
      <div className="flex h-[23px] items-stretch bg-linear-to-b from-[#accffa] to-[#87aee6] text-[10px] whitespace-nowrap">
        <div className="flex w-[23px] items-center justify-center border-r border-[#6385b5]"><CandleLogo className="w-[18px] h-[18px]" /></div>
        <div className="flex w-[85px] items-center justify-center border-r border-[#6385b5]">Liste des ordres</div>
        <div className="flex w-[116px] items-center justify-center gap-[4px] border-r border-[#6385b5]">Ordres en attente <b>1</b> <CrossBox /></div>
        <div className="relative flex w-[70px] items-center">
          <select aria-label="Période" className="h-full w-full appearance-none bg-transparent pl-[5px] outline-none" defaultValue="Aujourd'hui"><option>Aujourd'hui</option></select>
          <Caret className="absolute right-[5px] pointer-events-none" />
        </div>
        <div className="flex w-[147px] items-center bg-white pr-[5px]">
          <input type="text" aria-label="Filtrer les ordres" placeholder="Filtrer les ordres ..." className="w-full bg-transparent pl-[3px] italic outline-none placeholder:text-[#9a9a9a]" />
          <Icon className="w-[10px] h-[10px]" box="0 0 10 10"><path d="M1 1l8 8M9 1L1 9" stroke="#a9a9a9" strokeWidth="3" /></Icon>
        </div>
        <div className="flex items-center gap-[5px] pl-[5px]">
          Données indicatives
          <Icon className="w-[12px] h-[12px]" box="0 0 12 12"><path d="M6 0a5.500 5 0 010 10l-2 2v-2.500A5 5 0 016 0z" fill="#27a8ee" /><ellipse cx="5" cy="3" rx="3" ry="1.500" fill="#8fd8ff" /></Icon>
        </div>
        <div className="flex-1" />
        <Icon className="w-[18px] h-[23px]" box="0 0 18 24"><path d="M12 7L4 12l8 5" stroke="#fff" strokeWidth="1.600" /><g fill="#fff" stroke="#6b7f99" strokeWidth="0.600"><circle cx="12" cy="7" r="2.500" /><circle cx="4" cy="12" r="2.500" /><circle cx="12" cy="16" r="2.500" /></g><path d="M11 18h6l-3 4z" fill="#111" /></Icon>
        <div className="flex items-center pr-[5px] pl-[4px]"><WindowButtons color="#3c5577" /></div>
      </div>
      <div className="flex h-[19px] items-stretch border-t border-[#6f86a5]">
        {orderTabs.map((t) => (
          <button
            key={t.label}
            onClick={() => setTab(t.label)}
            className={`${t.width} border-r border-[#9aa5ab] whitespace-nowrap ${tab === t.label ? 'bg-linear-to-b from-[#5a93ee] to-[#3b74d8] text-white' : 'bg-linear-to-b from-white to-[#ececec]'}`}
          >
            {t.label}
          </button>
        ))}
      </div>
      <table className="w-full table-fixed border-collapse">
        <colgroup>
          <col className="w-[18px]" /><col className="w-[78px]" /><col className="w-[82px]" /><col className="w-[77px]" /><col className="w-[75px]" />
          <col className="w-[77px]" /><col className="w-[76px]" /><col className="w-[77px]" /><col />
        </colgroup>
        <thead>
          <tr className="h-[15px] bg-[#41658e] leading-[15px] text-white">
            <th scope="col" aria-label="Détail" className="p-0">
              <Icon className="mx-auto h-[12px] w-[14px]" box="0 0 14 12"><path d="M1 1h9l3 3v7H1z" fill="#dfe8f0" stroke="#fff" /><path d="M3 4h6M3 6h8M3 8h8" stroke="#41658e" /></Icon>
            </th>
            <th scope="col" className="p-0 font-normal">
              <div className="flex items-center">
                <Icon className="h-[13px] w-[13px]"><Wrench color="#fff" /></Icon>
                <span className="flex flex-1 items-center justify-center gap-[3px]">
                  <Icon className="h-[6px] w-[8px]" box="0 0 8 6"><path d="M1 1h6L4 5z" fill="#8fa9c6" stroke="#fff" /></Icon>
                  Date
                </span>
                <span className="h-[8px] w-px bg-white" />
              </div>
            </th>
            {['Nom', 'Symbole', 'Sens', 'Type', 'Qté', 'Prix', 'Gain'].map((h) => (
              <th key={h} scope="col" className="p-0 font-normal">
                <div className="flex items-center">
                  <span className="flex-1">{h}</span>
                  {h !== 'Gain' && <span className="h-[8px] w-px bg-white" />}
                </div>
              </th>
            ))}
          </tr>
        </thead>
        <tbody>
          {orders.map((o, i) => {
            const tone = o.side === 'Vente' ? 'text-[#a8101c]' : 'text-[#128a1c]';
            return (
              <tr key={o.time} className={`h-[33px] ${i % 2 === 0 ? 'bg-[#d7e6ed]' : 'bg-[#d1d6dd]'}`}>
                <td className="border-r border-[#a3b0b8] p-0">
                  <Icon className="mx-auto h-[12px] w-[12px]" box="0 0 12 12"><path d="M1 1h7l3 3v7H1z" fill="#f5f8fa" stroke="#6f7d88" /><path d="M3 4h4M3 6h6M3 8.500h6" stroke="#222" strokeWidth="1.200" /></Icon>
                </td>
                <td className={`border-r border-[#a3b0b8] p-0 text-center ${tone}`}>{o.time}</td>
                <td className="border-r border-[#a3b0b8] p-0 pl-px whitespace-nowrap">{o.name}</td>
                <td className="border-r border-[#a3b0b8] p-0 pl-px">{o.symbol}</td>
                <td className={`border-r border-[#a3b0b8] p-0 pr-px text-right ${tone}`}>{o.side}</td>
                <td className={`border-r border-[#a3b0b8] p-0 pr-px text-right ${tone}`}>{o.type}</td>
                <td className={`border-r border-[#a3b0b8] p-0 pr-px text-right font-bold ${tone}`}>{o.qty}</td>
                <td className={`border-r border-[#a3b0b8] p-0 pr-px text-right font-bold ${tone}`}>{o.price}</td>
                <td className={`p-0 pr-px text-right ${o.gain ? 'bg-[#99d699]' : ''}`}>{o.gain}</td>
              </tr>
            );
          })}
        </tbody>
      </table>
    </section>
  );
};

const ZoomIcon = ({ sign }: { sign: string }) => (
  <Icon><circle cx="9" cy="8" r="6" fill="#f2f6f8" stroke="#444" strokeWidth="1.300" /><path d="M13 13l6 7" stroke="#111" strokeWidth="3" /><path d={sign} stroke="#1414e6" strokeWidth="2" /></Icon>
);

const BottomBar = () => (
  <div className="flex h-[24px] items-stretch border-y border-[#56727e] bg-[#9bb9c7] text-[10px]">
    <button aria-label="Dessin" className="flex w-[30px] items-center justify-center border-r border-[#6e8a96]"><DrawIcon /></button>
    <button aria-label="Options de dessin" className="flex w-[13px] items-center justify-center"><Caret /></button>
    <button aria-label="Indicateurs" className="flex w-[28px] items-center justify-center bg-white">
      <Icon><path d="M1 8c4-7 7-7 10-1s6 4 10 0" stroke="#d33" strokeWidth="1.300" /><path d="M1 5c5-3 7 8 11 7s6-8 9-6" stroke="#2a9c3c" strokeWidth="1.300" /><path d="M2 20v-6h4v3h5v-3h4v2h5v4z" fill="#2fc33f" stroke="#16601f" /></Icon>
    </button>
    <button aria-label="Options des indicateurs" className="flex w-[14px] items-center justify-center border-l border-[#9aa9af] bg-[#e9eef0]"><Caret /></button>
    <button className="flex w-[63px] items-center gap-[4px] bg-[#2691d6] pl-[3px] text-white">
      <Icon className="w-[14px] h-[16px]" box="0 0 14 16"><path d="M11 3L3 8l8 5" stroke="#fff" strokeWidth="1.500" /><g fill="#fff"><circle cx="11" cy="3" r="2.600" /><circle cx="3" cy="8" r="2.600" /><circle cx="11" cy="13" r="2.600" /></g></Icon>
      Partager
    </button>
    <div className="flex items-center gap-px pl-[2px]">
      <button aria-label="Commentaires"><Icon><path d="M3 2h8l2 2v10H3z" fill="#fff" stroke="#a0b0b8" /><path d="M7 8h13v8h-5l-2 4v-4H7z" fill="#3e73d8" /><path d="M10 12h7" stroke="#fff" strokeWidth="2" strokeDasharray="1.500 1" /></Icon></button>
      <button aria-label="Journal"><Icon><path d="M5 2h12v18H5z" fill="#fff" stroke="#555" /><path d="M7 5h5M7 8h8M7 11h6M7 14h8M7 17h4" stroke="#333" /><path d="M13 4l3 4M8 12l4 3" stroke="#c33" strokeWidth="1.600" /></Icon></button>
      <button aria-label="Carnet"><Icon><path d="M11 2v18" stroke="#333" /><path d="M3 3h8v4H3zM11 8h7v4h-7zM5 13h6v4H5z" fill="#29b53c" stroke="#14691f" /><path d="M11 3h6v4h-6zM4 8h7v4H4zM11 13h8v4h-8z" fill="#e04a4a" stroke="#8b1d1d" /></Icon></button>
      <button aria-label="Fenêtres"><Icon><rect x="2" y="2" width="13" height="11" rx="1" fill="#fff" stroke="#2d62b4" strokeWidth="1.500" /><rect x="7" y="8" width="13" height="12" rx="1" fill="#fff" stroke="#2d62b4" strokeWidth="1.500" /><path d="M7 10h13" stroke="#2d62b4" strokeWidth="2" /><path d="M9 17l3-4 3 3 3-2" stroke="#2a9c3c" /></Icon></button>
      <button aria-label="Réglages"><Icon><rect x="3" y="10" width="6" height="8" fill="#e04a4a" stroke="#8b1d1d" /><rect x="13" y="3" width="7" height="13" fill="#3fcf4a" stroke="#14691f" /><g stroke="#222" strokeWidth="3"><path d="M6 16L12 11" /></g><path d="M11 11c0-3 2-5 5-5l-2 3 2 2 3-1c0 3-3 5-6 3z" fill="#fff" stroke="#222" /><path d="M17 0v3M17 16v5" stroke="#222" /></Icon></button>
      <button aria-label="Replier" className="pl-[4px] text-[14px] text-[#3f525a]">«</button>
    </div>
    <div className="my-[3px] ml-[5px] flex flex-1 items-stretch border-y border-[#7b949f]">
      <button aria-label="Défiler à gauche" className="flex w-[15px] items-center justify-center border border-[#7b949f] bg-[#acccd9]">
        <svg viewBox="0 0 4 8" className="h-[7px] w-[4px]" aria-hidden="true"><path d="M4 0v8L0 4z" fill="#111" /></svg>
      </button>
      <div className="flex flex-1 justify-end">
        <div className="w-[58%] border-x border-[#7b949f] bg-linear-to-b from-[#bcdbe7] to-[#9dbdca]" />
      </div>
      <button aria-label="Défiler à droite" className="flex w-[14px] items-center justify-center border-r border-[#7b949f] bg-[#acccd9]">
        <svg viewBox="0 0 4 8" className="h-[7px] w-[4px]" aria-hidden="true"><path d="M0 0v8l4-4z" fill="#111" /></svg>
      </button>
    </div>
    <div className="flex items-center gap-[2px] pl-[2px]">
      <button aria-label="Zoom auto"><Icon><circle cx="9" cy="8" r="6" fill="#d7dcde" stroke="#444" strokeWidth="1.300" /><path d="M13 13l5 6" stroke="#111" strokeWidth="3" /><path d="M19.500 2v9M17.500 4l2-2 2 2M17.500 9l2 2 2-2M1 18.500h9M3 16.500l-2 2 2 2M8 16.500l2 2-2 2" stroke="#1414e6" strokeWidth="1.500" /></Icon></button>
      <button aria-label="Zoom arrière"><ZoomIcon sign="M6 8h6" /></button>
      <button aria-label="Zoom avant"><ZoomIcon sign="M6 8h6M9 5v6" /></button>
      <button aria-label="Aller à la fin"><Icon><path d="M2 5h20v5H2z" fill="#fff" /><path d="M3 7.500h18" stroke="#333" strokeWidth="3" strokeDasharray="3 2" /><path d="M11 12h3v3h3l-4.500 5L8 15h3z" fill="#1d62d8" /></Icon></button>
    </div>
  </div>
);

const DeskArt = () => (
  <svg viewBox="0 0 90 46" className="h-[46px] w-[90px]" aria-hidden="true">
    <path d="M3 39h87v7H0z" fill="#e9bd84" /><path d="M3 39h87v2H2z" fill="#f6d6a6" />
    <rect x="12" y="26" width="10" height="14" rx="1" fill="#f4e3c8" /><path d="M17 18c-4 4-3 8 0 8s4-4 0-8z" fill="#f58b1c" />
    <rect x="28" y="26" width="15" height="14" rx="1" fill="#c8733c" /><rect x="27" y="25" width="17" height="4" fill="#d98a50" />
    <path d="M35 26C33 14 30 8 25 7c4 5 5 13 8 19zM35 26c-1-12-1-18 1-24 3 8 3 16 1 24zM37 26c1-10 4-16 9-18-3 5-5 12-7 18zM34 26c-3-8-7-10-10-10 3 3 5 7 7 10zM38 26c2-6 5-9 9-9-3 3-5 6-6 9z" fill="#5fae2f" />
    <path d="M62 6l17 10-1 23" stroke="#66594f" strokeWidth="2.500" fill="none" /><circle cx="62" cy="7" r="3" fill="#4a4039" /><circle cx="79" cy="16" r="3" fill="#7b6b5c" />
    <path d="M62 8c-8 0-14 6-14 14 4 4 10 5 15 3 2-6 2-12-1-17z" fill="#4a3f38" /><path d="M57 9c-5 3-8 8-7 14 3 2 4 2 7 2-2-6-2-11 0-16z" fill="#80705f" />
    <rect x="71" y="37" width="16" height="3" rx="1" fill="#4a4039" />
  </svg>
);

const taskApps: { name: string; open?: string; icon: React.ReactNode }[] = [
  { name: 'Affichage des tâches', icon: <Icon className="w-[22px] h-[22px]"><path d="M2 1v3h12V1M2 21v-3h12v3M2 7h12v8H2zM18 1v20" stroke="#1b1b1b" strokeWidth="1.300" /><path d="M16.500 6h3v3h-3z" fill="#1b1b1b" /></Icon> },
  { name: 'Explorateur', icon: <Icon className="w-[28px] h-[26px]" box="0 0 28 26"><path d="M1 2h9l3 3h13v17H1z" fill="#dca11d" /><path d="M1 6h26v16H1z" fill="#fcd468" /><path d="M6 25V14h16v11h-5v-5h-6v5z" fill="#3f8fd8" /></Icon> },
  { name: 'Courrier', icon: <Icon className="w-[30px] h-[28px]" box="0 0 30 28"><path d="M1 10L15 0l14 10v6H1z" fill="#0f55a0" /><path d="M4 10h22L15 20z" fill="#fff" /><path d="M1 10l14 10L29 10v17H1z" fill="#2bb0ea" /><path d="M1 27l14-9 14 9z" fill="#1686cf" /></Icon> },
  { name: 'Cadeaux', icon: <Icon className="w-[28px] h-[28px]" box="0 0 28 28"><path d="M0 0h28v28H0z" fill="#fff" /><path d="M8 11h5v4H8zM15 11h5v4h-5zM8 16h5v6H8zM15 16h5v6h-5z" fill="#b5121b" /><circle cx="12" cy="8" r="2" stroke="#b5121b" strokeWidth="1.400" /><circle cx="16.500" cy="8" r="2" stroke="#b5121b" strokeWidth="1.400" /></Icon> },
  { name: 'Chrome', open: 'line', icon: <Icon className="w-[28px] h-[28px]" box="0 0 28 28"><circle cx="14" cy="14" r="14" fill="#fbc116" /><path d="M14 14L1.900 7A14 14 0 0126.100 7L26.500 7.800H14z" fill="#e0392b" /><path d="M1.900 7A14 14 0 0014 28l6-10.500-6 2-6-3z" fill="#2a9c48" /><circle cx="14" cy="14" r="6.500" fill="#fff" /><circle cx="14" cy="14" r="5" fill="#2f7de9" /></Icon> },
  { name: 'Capture', icon: <Icon className="w-[28px] h-[28px]" box="0 0 28 28"><circle cx="4.500" cy="12" r="4.500" fill="#c9406f" /><circle cx="23.500" cy="12" r="4.500" fill="#c9406f" /><circle cx="4" cy="10" r="2.500" fill="#ee86a8" /><circle cx="24" cy="10" r="2.500" fill="#ee86a8" /><path d="M6 10c0-12 16-12 16 0v8H6z" fill="#e0648f" /><ellipse cx="14" cy="13" rx="5" ry="5" fill="#fbe0d2" /><path d="M8 12c1-7 11-7 12 0l-3-2-3 2-2-2z" fill="#d94f7e" /><path d="M10.500 13.500h2M15.500 13.500h2" stroke="#5a2433" strokeWidth="1.500" /><path d="M6 17l4 1v4H5zM22 17l-4 1v4h5z" fill="#f3e4dd" /><rect x="7" y="18" width="15" height="9" rx="2" fill="#2c2626" /><circle cx="17" cy="22.500" r="4" fill="#111" stroke="#777" /><circle cx="16" cy="21.500" r="1" fill="#99a" /></Icon> },
  { name: 'Calculatrice', icon: <Icon className="w-[22px] h-[28px]" box="0 0 22 28"><rect width="22" height="28" rx="1" fill="#66707a" /><rect x="3" y="3" width="16" height="5" fill="#4bc6f2" /><path d="M3 10h4v4H3zM8.500 10h4v4h-4zM14 10h5v4h-5zM3 15.500h4v4H3zM8.500 15.500h4v4h-4zM3 21h4v4H3zM8.500 21h4v4h-4z" fill="#dfe4e8" /><path d="M14 15.500h5V25h-5z" fill="#174b96" /></Icon> },
  { name: 'ProRealTime', open: 'active', icon: <CandleLogo className="w-[26px] h-[28px]" /> },
];

const Taskbar = () => (
  <footer className="flex h-[47px] items-stretch bg-linear-to-r from-[#d6dde9] to-[#dde2ef] font-['Noto_Sans',sans-serif] text-[#1b1b1b]">
    <button aria-label="Démarrer" className="flex w-[57px] items-center justify-center">
      <Icon className="w-[20px] h-[20px]" box="0 0 20 20"><path d="M0 3l8-1v7.500H0zM9 1.800L20 0v9.500H9zM0 10.500h8V18l-8-1zM9 10.500h11V20L9 18.200z" fill="#111" /></Icon>
    </button>
    <label className="flex w-[337px] items-end bg-white pl-[13px]">
      <Icon className="mb-[14px] w-[20px] h-[20px]" box="0 0 20 20"><circle cx="12" cy="8" r="6.500" stroke="#222" strokeWidth="1.500" /><path d="M7 13l-6 6" stroke="#222" strokeWidth="1.600" /></Icon>
      <input type="text" aria-label="Rechercher" placeholder="Taper ici pour" className="h-full min-w-0 flex-1 bg-transparent pl-[14px] text-[17px] outline-none placeholder:text-[#3a3a3a]" />
      <DeskArt />
    </label>
    <div className="ml-px flex">
      {taskApps.map((app) => (
        <button
          key={app.name}
          aria-label={app.name}
          className={`flex w-[58px] items-center justify-center border-y-3 border-t-transparent ${app.open ? 'border-b-[#1273c4]' : 'border-b-transparent'} ${app.open === 'active' ? 'bg-[#edf1f7]' : ''}`}
        >
          {app.icon}
        </button>
      ))}
    </div>
    <div className="flex-1" />
    <button className="flex items-center gap-[9px] text-[16px] whitespace-nowrap">
      <Icon className="w-[30px] h-[28px]" box="0 0 30 28"><path d="M13 1c2 5-3 10-11 9 1 5 6 7 10 5s5-10 1-14z" fill="#f4a51e" /><path d="M8 27a6.500 6.500 0 01-1-13 8 8 0 0115 0 6.500 6.500 0 011 13z" fill="#8db8f2" /><path d="M8 25a5 5 0 01-1-9 8 8 0 0113-1z" fill="#bed8fa" /></Icon>
      <span className="flex gap-[9px]"><span>9°C</span><span>Ciel couvert</span></span>
    </button>
    <div className="ml-[26px] flex items-center gap-[8px]">
      <Icon className="w-[20px] h-[20px]" box="0 0 20 20"><path d="M3 14l7-8 7 8" stroke="#222" strokeWidth="1.500" /></Icon>
      <Icon className="w-[20px] h-[20px]" box="0 0 20 20"><rect x="5" y="5" width="8" height="10" rx="2" stroke="#222" strokeWidth="1.300" /><path d="M13 9l4-2.500v7L13 11M5 2.500c2-1.500 6-1.500 8 0M5 17.500c2 1.500 6 1.500 8 0" stroke="#222" strokeWidth="1.300" /></Icon>
      <Icon className="w-[20px] h-[20px]" box="0 0 20 20"><path d="M5 16a4 4 0 010-8 6 6 0 0111 1 3.500 3.500 0 010 7z" fill="#b9bcc0" stroke="#222" strokeWidth="1.300" /><path d="M6 8a6 6 0 0110 1l-6 3z" fill="#565a5e" /></Icon>
      <Icon className="w-[20px] h-[20px]" box="0 0 20 20"><rect x="4" y="6" width="13" height="9" fill="#111" stroke="#111" /><path d="M18.500 9v3M1.500 3v3.500h3V3M3 7v4" stroke="#111" strokeWidth="1.500" /></Icon>
      <Icon className="w-[20px] h-[20px]" box="0 0 20 20"><path d="M3 17C3 9 9 3 17 3M7 17c0-6 4-10 10-10M11 17c0-3 3-6 6-6" stroke="#333" strokeWidth="1.300" /><circle cx="15" cy="16" r="1.500" fill="#111" /></Icon>
      <Icon className="w-[20px] h-[20px]" box="0 0 20 20"><path d="M1 7h3l4-4v14l-4-4H1z" stroke="#222" strokeWidth="1.300" /><path d="M11 7c1 2 1 4 0 6" stroke="#222" strokeWidth="1.200" /><path d="M13.500 5c2 3 2 7 0 10M16.500 3c3 4 3 10 0 14" stroke="#888" strokeWidth="1.200" /></Icon>
    </div>
    <div className="ml-[13px] flex flex-col items-center justify-center text-[13px] leading-[24px]">
      <span>21:38</span>
      <span>21/02/2024</span>
    </div>
    <button aria-label="Notifications" className="mr-[25px] ml-[23px] flex items-center">
      <Icon className="w-[20px] h-[22px]" box="0 0 20 22"><path d="M0 1h19v15h-5l-4 4v-4H0z" fill="#111" /><path d="M4 5h11M4 8h11M4 11h7" stroke="#fff" strokeWidth="1.200" /><path d="M17 11c1 4-1 6-4 6 1 3 6 3 7 0 0-3-1-5-3-6z" fill="#111" stroke="#dde2ef" /></Icon>
    </button>
  </footer>
);

const App = () => {
  return (
    <div className="min-h-screen w-full overflow-hidden bg-white font-['Liberation_Sans',sans-serif] text-[#161616]">
      <TitleBar />
      <Toolbar />
      <ChartHeader />
      <InfoRow />
      <main className="relative">
        <PriceChart />
        <IndicatorStrip />
        <OrdersWindow />
      </main>
      <BottomBar />
      <Taskbar />
    </div>
  );
};

export default App;
